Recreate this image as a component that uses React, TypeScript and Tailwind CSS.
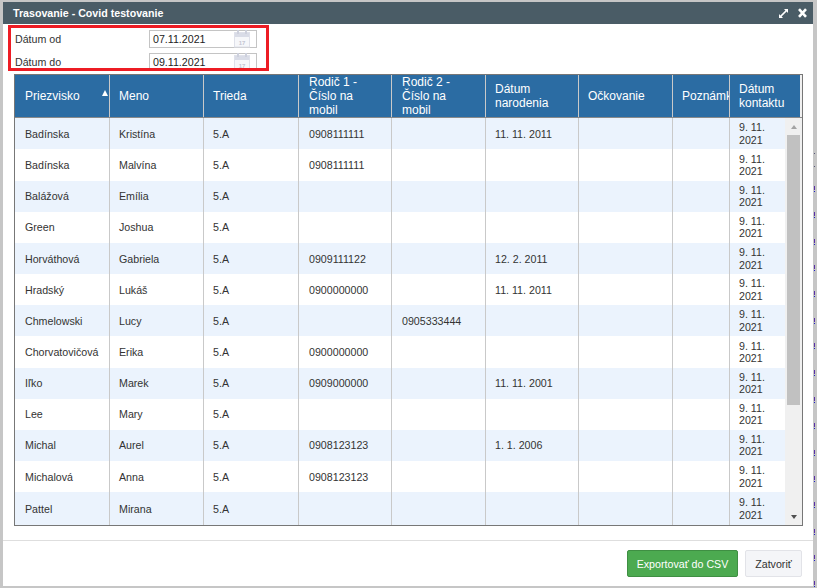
const rows = [
  ["Badínska", "Kristína", "5.A", "0908111111", "", "11. 11. 2011"],
  ["Badínska", "Malvína", "5.A", "0908111111", "", ""],
  ["Balážová", "Emília", "5.A", "", "", ""],
  ["Green", "Joshua", "5.A", "", "", ""],
  ["Horváthová", "Gabriela", "5.A", "0909111122", "", "12. 2. 2011"],
  ["Hradský", "Lukáš", "5.A", "0900000000", "", "11. 11. 2011"],
  ["Chmelowski", "Lucy", "5.A", "", "0905333444", ""],
  ["Chorvatovičová", "Erika", "5.A", "0900000000", "", ""],
  ["Iľko", "Marek", "5.A", "0909000000", "", "11. 11. 2001"],
  ["Lee", "Mary", "5.A", "", "", ""],
  ["Michal", "Aurel", "5.A", "0908123123", "", "1. 1. 2006"],
  ["Michalová", "Anna", "5.A", "0908123123", "", ""],
  ["Pattel", "Mirana", "5.A", "", "", ""],
];

const widths = [
  "w-[95px] pl-[10px]",
  "w-[94px] pl-[9px]",
  "w-[95px] pl-[9px]",
  "w-[93px] pl-[10px]",
  "w-[94px] pl-[10px]",
  "w-[93px] pl-[9px]",
  "w-[94px] pl-[9px]",
  "w-[57px] pl-[9px]",
];

// stray marks of the page behind the dialog, visible in the right strip
const specks = [153, 166, 186, 212, 239, 265, 291, 318, 343, 370, 397, 423, 450, 476, 502, 529, 555, 581];

function CalendarIcon() {
  return (
    <svg width="17" height="18" viewBox="0 0 17 18" className="shrink-0 -mt-[1px]">
      <rect x="0.5" y="2.5" width="15" height="14.5" fill="#f6f7fa" stroke="#dfe1ea" />
      <rect x="1" y="3" width="14" height="4" fill="#d9dce7" />
      <rect x="3" y="0" width="2" height="4" fill="#cdd0dc" />
      <rect x="11" y="0" width="2" height="4" fill="#cdd0dc" />
      <text x="8" y="14.5" textAnchor="middle" fontSize="6" fontWeight="700" fill="#c3c6d2">
        17
      </text>
    </svg>
  );
}

function DateRow({ label, value }: { label: string; value: string }) {
  return (
    <div className="flex items-start h-[23px] pt-[2px]">
      <span className="w-[134px] leading-[18px]">{label}</span>
      <div className="w-[108px] h-[18px] border border-[#c4c4c4] flex items-center justify-between pl-[3px] pr-[5px] text-[#222]">
        <span>{value}</span>
        <CalendarIcon />
      </div>
    </div>
  );
}

function HeadCell({ i, children }: { i: number; children: React.ReactNode }) {
  return (
    <div
      className={`${widths[i]} shrink-0 relative overflow-hidden border-r border-[#c9c9c9] pr-[8px] flex items-center leading-[14px] text-white`}
    >
      {children}
    </div>
  );
}

export default function App() {
  return (
    <div className="relative w-[817px] h-[588px] bg-[#c6c6c6] pt-[2px] pb-[2px] pl-[3px] font-['Liberation_Sans',Arial,sans-serif] text-[10.67px] text-[#333] overflow-hidden">
      <div className="w-[810px] h-[584px] bg-white flex flex-col">
        <div className="h-[22px] shrink-0 bg-[#4a5c66] flex items-center justify-between pl-[10px] pr-[6px] text-white font-bold">
          <span>Trasovanie - Covid testovanie</span>
          <div className="flex items-center gap-[10px]">
            <svg width="9" height="9" viewBox="0 0 9 9" fill="white">
              <path d="M9 0v4L7.6 2.6 2.6 7.6 4 9H0V5l1.4 1.4 5-5L5 0z" />
            </svg>
            <svg width="9" height="10" viewBox="0 0 9 10" stroke="white" strokeWidth="2.6">
              <path d="M1 1.2l7 7.6M8 1.2l-7 7.6" />
            </svg>
          </div>
        </div>
        <div className="relative flex-1 flex flex-col min-h-0">
          <div className="pt-[4px] pl-[12px]">
            <DateRow label="Dátum od" value="07.11.2021" />
            <DateRow label="Dátum do" value="09.11.2021" />
          </div>
          <div className="absolute left-[5px] top-[1px] w-[261px] h-[46px] border-[3px] border-[#ed1c24]" />
          <div className="ml-[11px] w-[789px] h-[452px] shrink-0 border border-[#777] flex flex-col">
            <div className="flex h-[43px] shrink-0 border-b border-[#8a8a8a] text-[12px] bg-[#f0f0f0]">
              <div className="flex h-[42px] w-[785px] bg-[#2b6ca3] shrink-0">
                <HeadCell i={0}>
                  Priezvisko
                  <span className="absolute right-[1px] top-[15px] w-0 h-0 border-x-[3.5px] border-x-transparent border-b-[6px] border-b-white" />
                </HeadCell>
                <HeadCell i={1}>Meno</HeadCell>
                <HeadCell i={2}>Trieda</HeadCell>
                <HeadCell i={3}>Rodič 1 - Číslo na mobil</HeadCell>
                <HeadCell i={4}>Rodič 2 - Číslo na mobil</HeadCell>
                <HeadCell i={5}>Dátum narodenia</HeadCell>
                <HeadCell i={6}>Očkovanie</HeadCell>
                <HeadCell i={7}>
                  <span className="whitespace-nowrap">Poznámka</span>
                </HeadCell>
                <div className="flex-1 pl-[9px] flex items-center leading-[14px] text-white">
                  Dátum kontaktu
                </div>
              </div>
            </div>
            <div className="flex flex-1 min-h-0">
              <div className="w-[770px] shrink-0 flex flex-col overflow-hidden pt-[0.34px] bg-[#ebf3fd]">
                {rows.map((r, n) => (
                  <div
                    key={n}
                    className={`flex h-[31.167px] shrink-0 last:h-auto last:flex-1 ${n % 2 === 0 ? "bg-[#ebf3fd]" : "bg-white"}`}
                  >
                    {r.map((c, i) => (
                      <div
                        key={i}
                        className={`${widths[i]} shrink-0 border-r border-[#c9c9c9] flex items-center`}
                      >
                        {c}
                      </div>
                    ))}
                    <div className={`${widths[6]} shrink-0 border-r border-[#c9c9c9]`} />
                    <div className={`${widths[7]} shrink-0 border-r border-[#c9c9c9]`} />
                    <div className="flex-1 pl-[9px] flex items-center leading-[12.5px]">
                      9. 11. 2021
                    </div>
                  </div>
                ))}
              </div>
              <div className="flex-1 bg-[#f0f0f0] flex flex-col items-center">
                <div className="h-[17px] shrink-0 flex items-center">
                  <span className="w-0 h-0 border-x-[3.5px] border-x-transparent border-b-[4px] border-b-[#a3a3a3]" />
                </div>
                <div className="w-[13px] h-[270px] shrink-0 bg-[#c1c1c1]" />
                <div className="flex-1" />
                <div className="h-[17px] shrink-0 flex items-center">
                  <span className="w-0 h-0 border-x-[3.5px] border-x-transparent border-t-[4px] border-t-[#505050]" />
                </div>
              </div>
            </div>
          </div>
          <div className="mt-[14px] border-t border-[#dedede] flex-1 flex justify-end items-start pt-[9px] pr-[11px] gap-[7px]">
            <button className="h-[27px] w-[111px] bg-[#4caa50] border border-[#3f8f43] rounded-[2px] text-white">
              Exportovať do CSV
            </button>
            <button className="h-[27px] w-[57px] bg-[#f4f5f8] border border-[#e2e3e8] rounded-[2px] text-[#333]">
              Zatvoriť
            </button>
          </div>
        </div>
      </div>
      {specks.map((y, n) => (
        <div key={y} className="absolute left-[814px] w-[1px]" style={{ top: y }}>
          <div className={n < 2 ? "h-[1px] bg-[#555577]" : "h-[4px] bg-[#5a2ea6]"} />
          {n >= 2 && <div className="h-[1px] mt-[1px] bg-[#1a1ac8]" />}
        </div>
      ))}
    </div>
  );
}
